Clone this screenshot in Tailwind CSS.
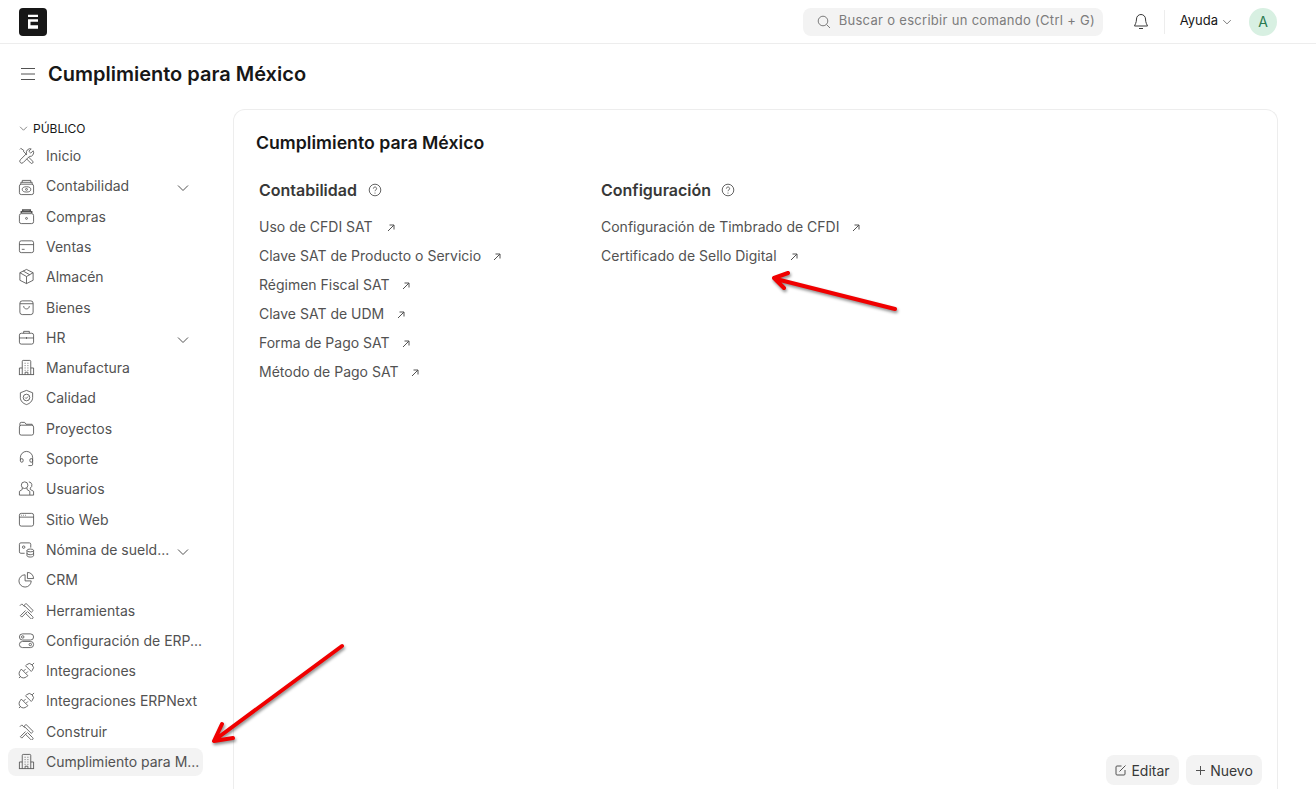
<!DOCTYPE html>
<html lang="es">
<head>
  <meta charset="UTF-8" />
  <title>Cumplimiento para México</title>
  <script src="https://cdn.jsdelivr.net/npm/@tailwindcss/browser@4"></script>
</head>
<body class="relative h-[789px] overflow-hidden bg-white font-['Inter',sans-serif] text-[#171717]">

  <!-- Shared icons -->
  <svg class="hidden">
    <defs>
      <symbol id="i-chev" viewBox="0 0 16 16"><path d="M3 5.5l5 5 5-5" fill="none" stroke="currentColor" stroke-width="1"/></symbol>
      <symbol id="i-ext" viewBox="0 0 10 10"><path d="M2 8l6-6M3.5 2H8v4.5" fill="none" stroke="currentColor" stroke-width="1"/></symbol>
      <symbol id="i-help" viewBox="0 0 14 14"><g fill="none" stroke="currentColor" stroke-width=".9"><circle cx="7" cy="7" r="5.8"/><path d="M5.4 5.6a1.600 1.600 0 1 1 2.500 1.300c-.6.400-.9.700-.9 1.300"/></g><circle cx="7" cy="10" r=".6" fill="currentColor"/></symbol>
      <symbol id="i-tools" viewBox="0 0 18 18"><g fill="none" stroke="currentColor" stroke-width=".9"><path d="M16 4l-2.500 2.500-2-2L14 2a4 4 0 0 0-5 5L2.500 13.500a2.100 2.100 0 0 0 3 3L12 10a4 4 0 0 0 4-6z"/><path d="M2 2.500l1-1 3 2V5l3.500 3.500M11 10.500l4.500 4.500a1.400 1.400 0 0 1-2 2L9 12.500"/></g></symbol>
      <symbol id="i-account" viewBox="0 0 18 18"><g fill="none" stroke="currentColor" stroke-width=".9"><rect x="1.500" y="5.500" width="15" height="11" rx="2"/><path d="M3 5.500v-2h12v2M4.500 3.500v-2h9v2"/><ellipse cx="9" cy="11" rx="4.500" ry="2.800"/><circle cx="9" cy="11" r="1"/></g></symbol>
      <symbol id="i-buy" viewBox="0 0 18 18"><g fill="none" stroke="currentColor" stroke-width=".9"><rect x="1.500" y="6" width="15" height="10.500" rx="2"/><path d="M3.500 5.500V4h11v1.500M5 3.500V2h8v1.500" stroke-width="1.600"/><circle cx="9" cy="11" r="1"/></g></symbol>
      <symbol id="i-card" viewBox="0 0 18 18"><g fill="none" stroke="currentColor" stroke-width=".9"><rect x="1.500" y="3" width="15" height="12.500" rx="2"/><path d="M1.500 7h15M4 12h3"/></g></symbol>
      <symbol id="i-box" viewBox="0 0 18 18"><g fill="none" stroke="currentColor" stroke-width=".9"><path d="M9 1.500l7 3.500v8l-7 3.500L2 13V5l7-3.500z"/><path d="M2 5l7 4 7-4M9 9v7.500M5.500 3.200l7 4"/></g></symbol>
      <symbol id="i-bag" viewBox="0 0 18 18"><g fill="none" stroke="currentColor" stroke-width=".9"><rect x="2" y="2" width="14" height="14.500" rx="2.500"/><path d="M2 5h14M6 7.500c0 4 6 4 6 0"/></g></symbol>
      <symbol id="i-case" viewBox="0 0 18 18"><g fill="none" stroke="currentColor" stroke-width=".9"><rect x="1.500" y="4.500" width="15" height="11.500" rx="2"/><path d="M6 4.500v-2h6v2M1.500 9.500h15M9 8.500v2"/></g></symbol>
      <symbol id="i-building" viewBox="0 0 18 18"><g fill="none" stroke="currentColor" stroke-width=".9"><path d="M4.500 16.500v-14a1 1 0 0 1 1-1h7a1 1 0 0 1 1 1v14M1.500 16.500v-7h3M13.500 9.500h3v7M1 16.500h16"/><path d="M7 4.500h1M10 4.500h1M7 7h1M10 7h1M7 9.500h1M10 9.500h1M7 12h1M10 12h1M7.500 16.500V14h3v2.500"/></g></symbol>
      <symbol id="i-shield" viewBox="0 0 18 18"><g fill="none" stroke="currentColor" stroke-width=".9"><path d="M9 1.500L15.500 4v5c0 3.800-2.800 6.300-6.500 7.500C5.300 15.300 2.500 12.800 2.500 9V4L9 1.500z"/><circle cx="9" cy="9" r="3.500"/><path d="M7.500 9l1.100 1.100 2-2.100"/></g></symbol>
      <symbol id="i-folder" viewBox="0 0 18 18"><g fill="none" stroke="currentColor" stroke-width=".9"><rect x="1.500" y="5.500" width="15" height="10.500" rx="2"/><path d="M2 6V4a1.500 1.500 0 0 1 1.500-1.500H7l1.500 2H15v1"/></g></symbol>
      <symbol id="i-head" viewBox="0 0 18 18"><g fill="none" stroke="currentColor" stroke-width=".9"><path d="M2.500 11V8a6.500 6.500 0 0 1 13 0v3"/><path d="M2.500 11a1.500 2 0 1 0 3 0 1.500 2 0 1 0-3 0M12.500 11a1.500 2 0 1 0 3 0 1.500 2 0 1 0-3 0M15.500 11v4a1.500 1.500 0 0 1-1.500 1.500h-3"/></g></symbol>
      <symbol id="i-users" viewBox="0 0 18 18"><g fill="none" stroke="currentColor" stroke-width=".9"><path d="M7 2a3.500 3.500 0 0 1 0 7 3.500 3.500 0 0 1 0-7zM4.500 8.500V10l-3 2v4h11v-4l-3-2V8.500"/><path d="M11.500 2a3.500 3.500 0 0 1 1.500 6.500V10l3.500 2v4h-4"/></g></symbol>
      <symbol id="i-web" viewBox="0 0 18 18"><g fill="none" stroke="currentColor" stroke-width=".9"><rect x="1.500" y="2.500" width="15" height="13.500" rx="2"/><path d="M1.500 6.500h15"/><path d="M3.500 4.500h.8M5.500 4.500h.8M7.500 4.500h.8"/></g></symbol>
      <symbol id="i-payroll" viewBox="0 0 18 18"><g fill="none" stroke="currentColor" stroke-width=".9"><path d="M7 13H3a1.500 1.500 0 0 1-1.500-1.500v-8A1.500 1.500 0 0 1 3 2h9a1.500 1.500 0 0 1 1.500 1.500V7"/><circle cx="6" cy="6.500" r="1.300"/><ellipse cx="13" cy="10" rx="3.500" ry="1.500"/><path d="M9.500 10v5.500c0 .8 1.500 1.500 3.500 1.500s3.500-.7 3.500-1.500V10M9.500 13c0 .8 1.500 1.500 3.500 1.500s3.500-.7 3.500-1.500"/></g></symbol>
      <symbol id="i-pie" viewBox="0 0 18 18"><g fill="none" stroke="currentColor" stroke-width=".9"><path d="M7.500 4a6.500 6.500 0 1 0 6.500 6.500H7.500V4z"/><path d="M10 1.500A6.500 6.500 0 0 1 16.500 8H10V1.500z"/></g></symbol>
      <symbol id="i-hammer" viewBox="0 0 18 18"><g fill="none" stroke="currentColor" stroke-width=".9"><path d="M6.500 3.500l2-2L16 9l-2 2z"/><path d="M10 10l5.500 5.500a1.400 1.400 0 0 1-2 2L8 12"/><path d="M2.500 14.500L8 9M4 16l5.500-5.500M2.500 14.500L4 16"/><path d="M2 4l2-2 3 3"/></g></symbol>
      <symbol id="i-toggle" viewBox="0 0 18 18"><g fill="none" stroke="currentColor" stroke-width=".9"><rect x="1.500" y="2" width="15" height="6.500" rx="3.250"/><rect x="1.500" y="10" width="15" height="6.500" rx="3.250"/><circle cx="5" cy="5.250" r="1.300"/><circle cx="13" cy="13.250" r="1.300"/></g></symbol>
      <symbol id="i-plug" viewBox="0 0 18 18"><g fill="none" stroke="currentColor" stroke-width=".9"><path d="M8 4l6 6 1-1a4.200 4.200 0 0 0-6-6z"/><path d="M3.500 7.500l7 7-1.500 1a4.300 4.300 0 0 1-6.500-6.500z"/><path d="M1 17l2-2M15 3l2-2M6 9.500l2-2M8.500 12l2-2"/></g></symbol>
    </defs>
  </svg>

  <!-- Navbar -->
  <header class="flex h-[44px] items-center border-b border-[#ededed] pl-[19px] pr-[39px]">
    <div class="flex h-[28px] w-[28px] items-center justify-center rounded-[4px] bg-[#171717]">
      <svg width="12" height="16" viewBox="0 0 12 16"><path d="M1 .8h10V3H1zM1 5.300h10v2.400H3.500v3.600H11v3.400H1z" fill="#fff"/></svg>
    </div>
    <div class="ml-auto flex h-[28px] w-[300px] items-center rounded-[8px] bg-[#f3f3f3] pl-[14px] text-[#7c7c7c]">
      <svg width="14" height="14" viewBox="0 0 14 14" fill="none" stroke="currentColor"><circle cx="6" cy="6" r="4.800"/><path d="M9.500 9.500L13 13"/></svg>
      <span class="ml-[8px] pb-[2px] text-[13px] tracking-[0.023em] whitespace-nowrap">Buscar o escribir un comando (Ctrl + G)</span>
    </div>
    <svg class="ml-[30px] text-[#383838]" width="16" height="17" viewBox="0 0 16 17" fill="none" stroke="currentColor"><path d="M8 1.500A4.500 4.500 0 0 0 3.500 6c0 4-1.800 6-2 7h13c-.2-1-2-3-2-7A4.500 4.500 0 0 0 8 1.500zM6 15.500h4"/></svg>
    <div class="ml-[15px] h-[24px] w-px bg-[#ededed]"></div>
    <span class="ml-[15px] pb-[2px] text-[13px] text-[#171717]">Ayuda</span>
    <svg class="ml-[3px] text-[#525252]" width="12" height="12"><use href="#i-chev"/></svg>
    <div class="ml-[16px] flex h-[28px] w-[28px] items-center justify-center rounded-full bg-[#d8f0e2] text-[14px] text-[#2a7a50]">A</div>
  </header>

  <!-- Page head -->
  <div class="flex h-[60px] items-center pl-[20px]">
    <svg class="text-[#525252]" width="16" height="16" viewBox="0 0 16 16" fill="none" stroke="currentColor"><path d="M1 2.500h14M1 8h14M1 13.500h14"/></svg>
    <h1 class="ml-[12px] text-[20px] leading-none font-semibold">Cumplimiento para México</h1>
  </div>

  <div class="flex pt-[5px]">
    <!-- Sidebar -->
    <aside class="w-[233px] shrink-0 pl-[8px] pr-[30px] pt-[6.6px] text-[14px] text-[#525252]">
      <div class="flex h-[26px] items-center pl-[10px] text-[12px] text-[#171717]">
        <svg class="mr-[4px] text-[#525252]" width="11" height="11"><use href="#i-chev"/></svg>PÚBLICO
      </div>
      <nav class="flex flex-col gap-[2.3px]">
        <a class="flex h-[28px] items-center gap-[11px] pl-[10px]"><svg class="shrink-0" width="17" height="17"><use href="#i-tools"/></svg>Inicio</a>
        <a class="flex h-[28px] items-center gap-[11px] pl-[10px]"><svg class="mt-[3px] shrink-0" width="17" height="17"><use href="#i-account"/></svg><span class="min-w-0 flex-1">Contabilidad</span><svg class="mr-[12px] mt-[5px] shrink-0" width="16" height="16"><use href="#i-chev"/></svg></a>
        <a class="flex h-[28px] items-center gap-[11px] pl-[10px]"><svg class="shrink-0" width="17" height="17"><use href="#i-buy"/></svg>Compras</a>
        <a class="flex h-[28px] items-center gap-[11px] pl-[10px]"><svg class="shrink-0" width="17" height="17"><use href="#i-card"/></svg>Ventas</a>
        <a class="flex h-[28px] items-center gap-[11px] pl-[10px]"><svg class="shrink-0" width="17" height="17"><use href="#i-box"/></svg>Almacén</a>
        <a class="flex h-[28px] items-center gap-[11px] pl-[10px]"><svg class="shrink-0" width="17" height="17"><use href="#i-bag"/></svg>Bienes</a>
        <a class="flex h-[28px] items-center gap-[11px] pl-[10px]"><svg class="shrink-0" width="17" height="17"><use href="#i-case"/></svg><span class="min-w-0 flex-1">HR</span><svg class="mr-[12px] mt-[5px] shrink-0" width="16" height="16"><use href="#i-chev"/></svg></a>
        <a class="flex h-[28px] items-center gap-[11px] pl-[10px]"><svg class="shrink-0" width="17" height="17"><use href="#i-building"/></svg>Manufactura</a>
        <a class="flex h-[28px] items-center gap-[11px] pl-[10px]"><svg class="shrink-0" width="17" height="17"><use href="#i-shield"/></svg>Calidad</a>
        <a class="flex h-[28px] items-center gap-[11px] pl-[10px]"><svg class="shrink-0" width="17" height="17"><use href="#i-folder"/></svg>Proyectos</a>
        <a class="flex h-[28px] items-center gap-[11px] pl-[10px]"><svg class="shrink-0" width="17" height="17"><use href="#i-head"/></svg>Soporte</a>
        <a class="flex h-[28px] items-center gap-[11px] pl-[10px]"><svg class="shrink-0" width="17" height="17"><use href="#i-users"/></svg>Usuarios</a>
        <a class="flex h-[28px] items-center gap-[11px] pl-[10px]"><svg class="shrink-0" width="17" height="17"><use href="#i-web"/></svg>Sitio Web</a>
        <a class="flex h-[28px] items-center gap-[11px] pl-[10px]"><svg class="shrink-0" width="17" height="17"><use href="#i-payroll"/></svg><span class="min-w-0 flex-1 whitespace-nowrap">Nómina de sueld...</span><svg class="mr-[12px] mt-[5px] shrink-0" width="16" height="16"><use href="#i-chev"/></svg></a>
        <a class="flex h-[28px] items-center gap-[11px] pl-[10px]"><svg class="shrink-0" width="17" height="17"><use href="#i-pie"/></svg>CRM</a>
        <a class="flex h-[28px] items-center gap-[11px] pl-[10px]"><svg class="shrink-0" width="17" height="17"><use href="#i-hammer"/></svg>Herramientas</a>
        <a class="flex h-[28px] items-center gap-[11px] pl-[10px] whitespace-nowrap"><svg class="shrink-0" width="17" height="17"><use href="#i-toggle"/></svg>Configuración de ERP...</a>
        <a class="flex h-[28px] items-center gap-[11px] pl-[10px]"><svg class="shrink-0" width="17" height="17"><use href="#i-plug"/></svg>Integraciones</a>
        <a class="flex h-[28px] items-center gap-[11px] pl-[10px]"><svg class="shrink-0" width="17" height="17"><use href="#i-plug"/></svg>Integraciones ERPNext</a>
        <a class="flex h-[28px] items-center gap-[11px] pl-[10px]"><svg class="shrink-0" width="17" height="17"><use href="#i-hammer"/></svg>Construir</a>
        <a class="flex h-[28px] items-center gap-[11px] rounded-[8px] bg-[#f3f3f3] pl-[10px] whitespace-nowrap"><svg class="shrink-0" width="17" height="17"><use href="#i-building"/></svg>Cumplimiento para M...</a>
      </nav>
    </aside>

    <!-- Workspace card -->
    <main class="flex h-[700px] w-[1045px] flex-col rounded-t-[12px] border border-b-0 border-[#ededed] pb-[24px] pl-[22px] pr-[15px] pt-[22px]">
      <h2 class="text-[17.7px] leading-[22px] font-semibold">Cumplimiento para México</h2>
      <div class="flex flex-1 pl-[3px] pt-[25px] text-[14px] text-[#525252]">
        <section class="w-[342px]">
          <h3 class="mb-[11px] flex h-[22px] items-center text-[16px] font-semibold text-[#383838]">Contabilidad<svg class="ml-[11px] text-[#525252]" width="14" height="14"><use href="#i-help"/></svg></h3>
          <ul>
            <li class="flex h-[29px] items-center">Uso de CFDI SAT<svg class="ml-[13px] mt-[2px]" width="10" height="10"><use href="#i-ext"/></svg></li>
            <li class="flex h-[29px] items-center">Clave SAT de Producto o Servicio<svg class="ml-[11px] mt-[2px]" width="10" height="10"><use href="#i-ext"/></svg></li>
            <li class="flex h-[29px] items-center">Régimen Fiscal SAT<svg class="ml-[12px] mt-[2px]" width="10" height="10"><use href="#i-ext"/></svg></li>
            <li class="flex h-[29px] items-center">Clave SAT de UDM<svg class="ml-[12px] mt-[2px]" width="10" height="10"><use href="#i-ext"/></svg></li>
            <li class="flex h-[29px] items-center">Forma de Pago SAT<svg class="ml-[11px] mt-[2px]" width="10" height="10"><use href="#i-ext"/></svg></li>
            <li class="flex h-[29px] items-center">Método de Pago SAT<svg class="ml-[12px] mt-[2px]" width="10" height="10"><use href="#i-ext"/></svg></li>
          </ul>
        </section>
        <section>
          <h3 class="mb-[11px] flex h-[22px] items-center text-[16px] font-semibold text-[#383838]">Configuración<svg class="ml-[10px] text-[#525252]" width="14" height="14"><use href="#i-help"/></svg></h3>
          <ul>
            <li class="flex h-[29px] items-center">Configuración de Timbrado de CFDI<svg class="ml-[12px] mt-[2px]" width="10" height="10"><use href="#i-ext"/></svg></li>
            <li class="flex h-[29px] items-center">Certificado de Sello Digital<svg class="ml-[12px] mt-[2px]" width="10" height="10"><use href="#i-ext"/></svg></li>
          </ul>
        </section>
      </div>
      <div class="flex justify-end gap-[7px] text-[14px] text-[#383838]">
        <button class="flex h-[30px] w-[73px] items-center justify-center gap-[4px] rounded-[8px] bg-[#f3f3f3]">
          <svg width="12" height="12" viewBox="0 0 12 12" fill="none" stroke="#525252"><path d="M6.500 2H2a1 1 0 0 0-1 1v7a1 1 0 0 0 1 1h7a1 1 0 0 0 1-1V6M4.500 7.500l6-6"/></svg>Editar
        </button>
        <button class="flex h-[30px] w-[76px] items-center justify-center gap-[4px] rounded-[8px] bg-[#f3f3f3]">
          <svg width="11" height="11" viewBox="0 0 11 11" fill="none" stroke="#525252"><path d="M5.500 1v9M1 5.500h9"/></svg>Nuevo
        </button>
      </div>
    </main>
  </div>

  <!-- Red annotation arrows drawn over the screenshot -->
  <svg class="pointer-events-none absolute inset-0 drop-shadow-[1px_2px_1.5px_rgba(0,0,0,0.45)]" width="1316" height="789" viewBox="0 0 1316 789">
    <g fill="none" stroke="#f00000" stroke-width="4" stroke-linecap="round" stroke-linejoin="round">
      <path d="M895 309L776 279M788 273L774 278L784 288"/>
      <path d="M342 646L216 739M222 724L214 741L233 738"/>
    </g>
  </svg>
</body>
</html>
